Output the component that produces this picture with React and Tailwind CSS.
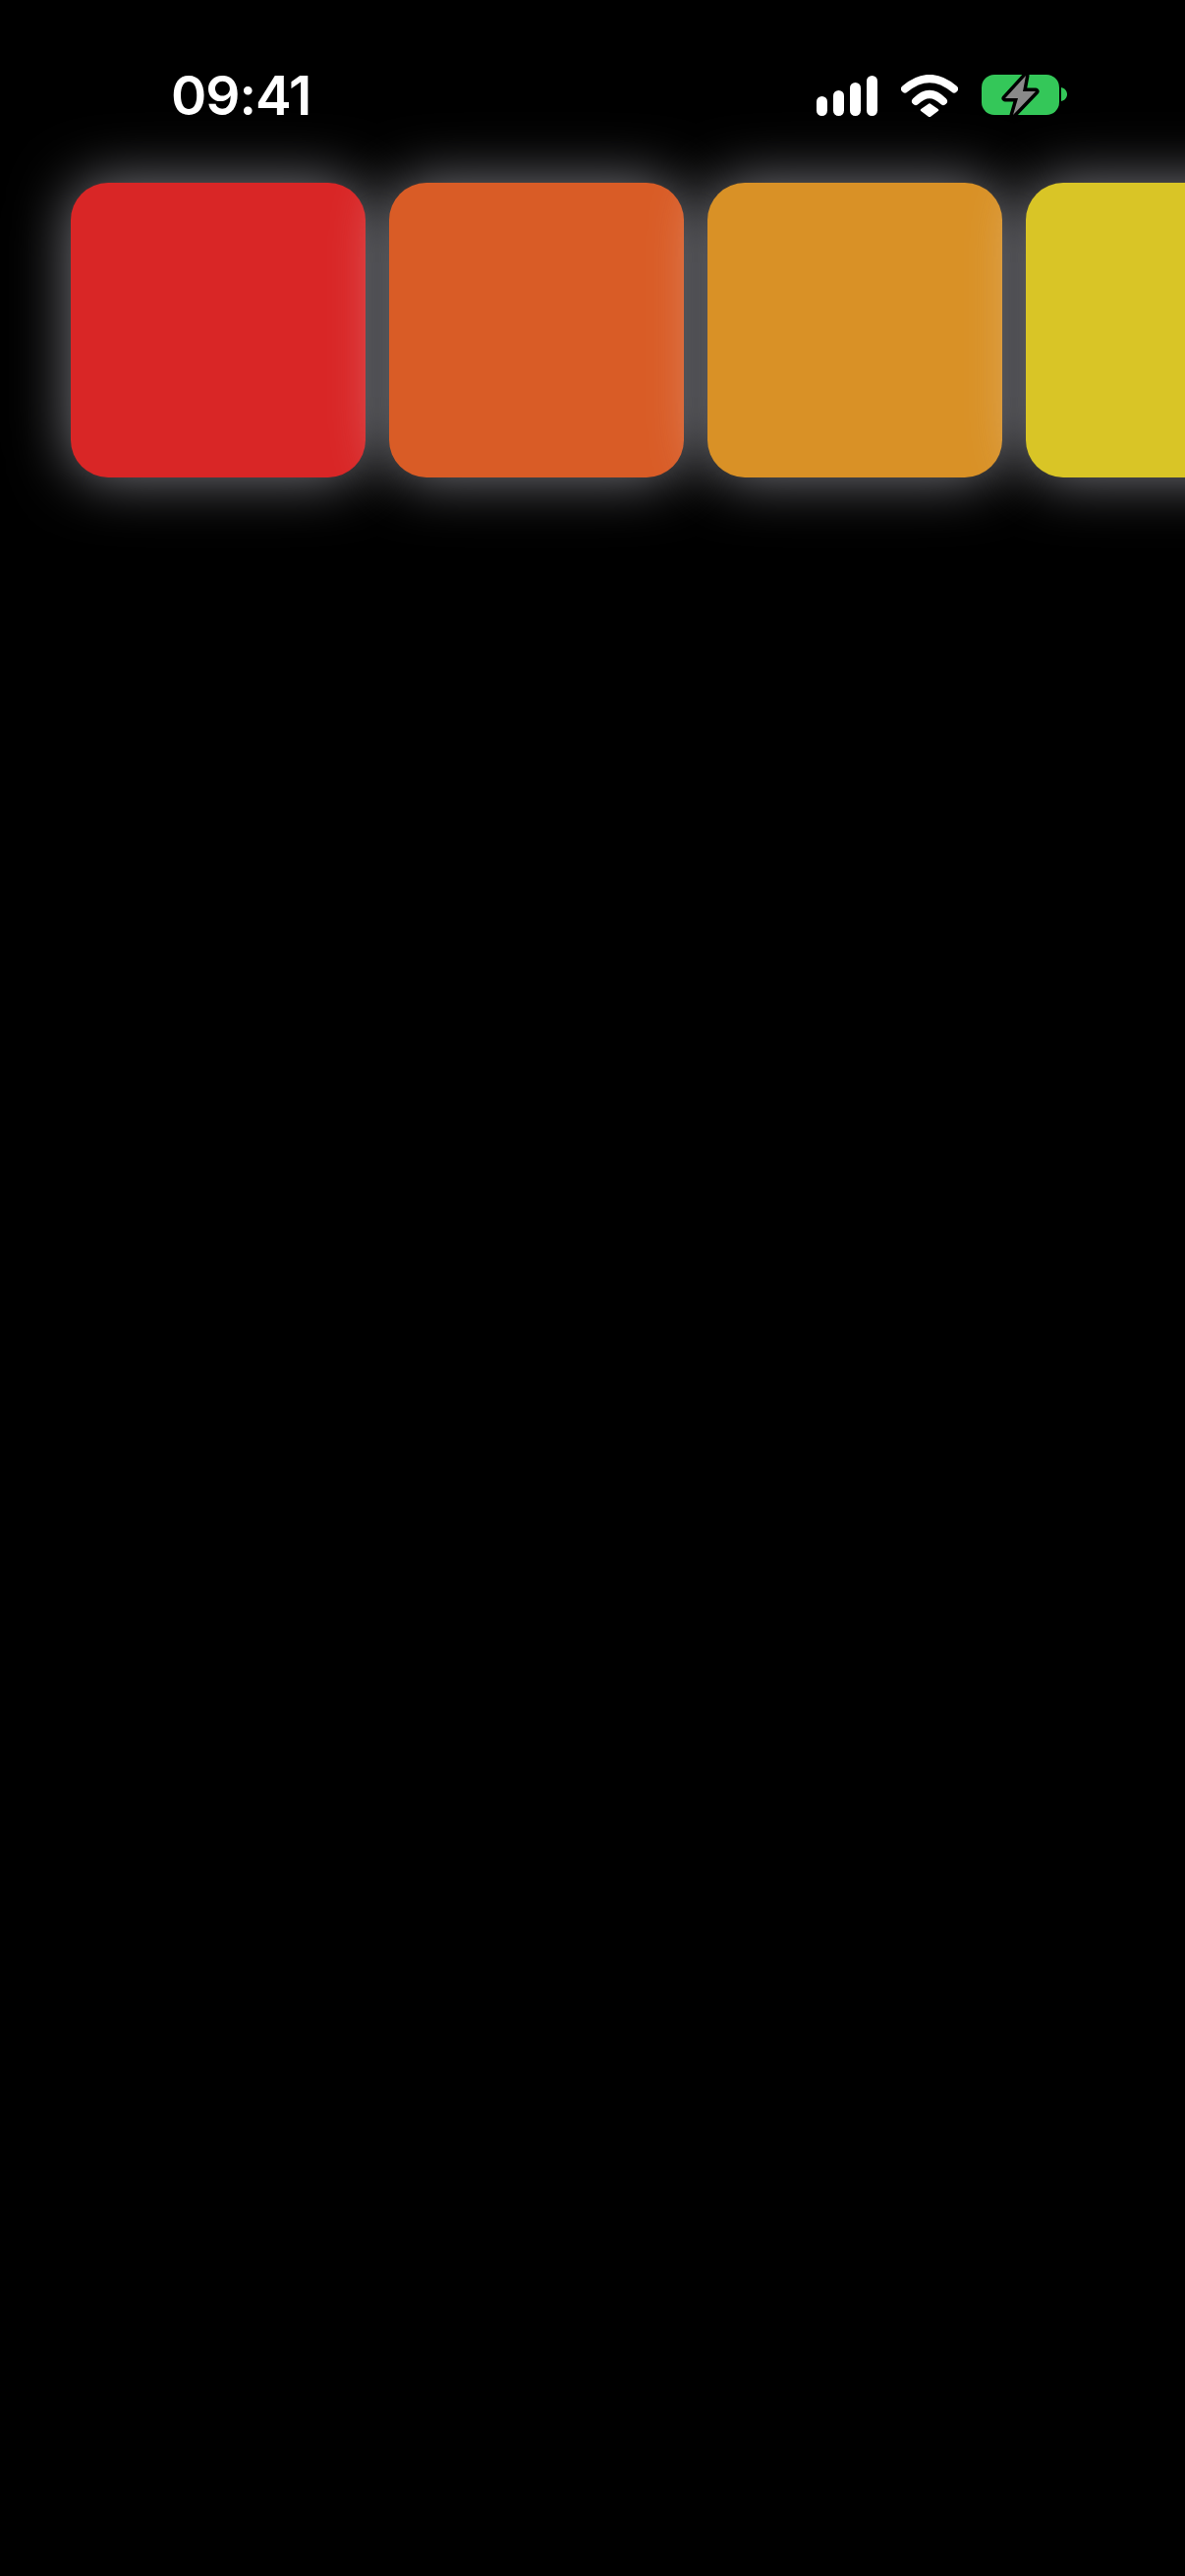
const tiles = ["bg-[#d92626]", "bg-[#d95c26]", "bg-[#d99126]", "bg-[#d9c526]"];

function SignalIcon() {
    return (
        <div className="flex items-end gap-[6px] h-[41px]">
            <div className="w-[11px] h-[20px] rounded-full bg-white" />
            <div className="w-[11px] h-[26px] rounded-full bg-white" />
            <div className="w-[11px] h-[34px] rounded-full bg-white" />
            <div className="w-[11px] h-[41px] rounded-full bg-white" />
        </div>
    );
}

function WifiIcon() {
    return (
        <svg width="58" height="43" viewBox="0 0 58 43" fill="none">
            <path d="M4 14.5Q29 -6.5 54 14.5" stroke="#fff" strokeWidth="8" strokeLinecap="round" />
            <path d="M15 27Q29 13 43 27" stroke="#fff" strokeWidth="8" strokeLinecap="round" />
            <path d="M21 36L29 30.5L37 36L29 42Z" fill="#fff" stroke="#fff" strokeWidth="2.5" strokeLinejoin="round" />
        </svg>
    );
}

function BatteryIcon() {
    return (
        <svg width="87" height="43" viewBox="0 0 87 43" fill="none" className="overflow-visible">
            <rect x="0" y="0" width="79" height="41" rx="13" fill="#34c759" />
            <path d="M81 13C85 14 87 17 87 20S85 26 81 27Z" fill="#34c759" />
            <path d="M45 1L24 24H37L32 41L55 17H42Z" fill="#8a8a8a" stroke="#000" strokeWidth="7" strokeLinejoin="round" className="[paint-order:stroke]" />
        </svg>
    );
}

export default function App() {
    return (
        <div className="h-[2622px] bg-black overflow-hidden" style={{ fontFamily: "Inter, sans-serif" }}>
            <div className="h-[186px] pt-[8px] pl-[174px] pr-[120px] flex items-center justify-between">
                <div className="text-[55px] leading-none font-semibold tracking-[-1px] text-white">09:41</div>
                <div className="flex items-center gap-6">
                    <SignalIcon />
                    <WifiIcon />
                    <BatteryIcon />
                </div>
            </div>

            <div className="flex gap-6 pl-[72px]">
                {tiles.map((color) => (
                    <div key={color}
                        className={`size-[300px] shrink-0 rounded-[38px] ${color} shadow-[0_0_60px_rgba(235,235,245,0.55)]`} />
                ))}
            </div>
        </div>
    );
}
